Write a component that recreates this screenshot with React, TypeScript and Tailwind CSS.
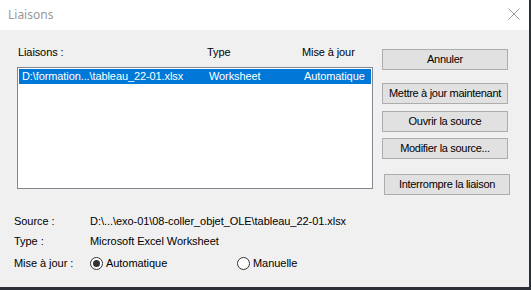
import React from "react";

const F = { fontFamily: '"Liberation Sans", Arial, sans-serif' };

function Btn({ label, className = "" }: { label: string; className?: string }) {
  return (
    <div
      className={`w-[126px] h-[21px] flex items-center justify-center bg-[#e1e1e1] border border-[#adadad] text-[11px] tracking-[-0.3px] text-black ${className}`}
    >
      {label}
    </div>
  );
}

function Radio({ checked }: { checked?: boolean }) {
  return (
    <div className="w-[13px] h-[13px] rounded-full border border-[#333333] bg-white flex items-center justify-center">
      {checked && <div className="w-[7px] h-[7px] rounded-full bg-[#333333]" />}
    </div>
  );
}

export default function App() {
  return (
    <div className="w-[531px] h-[290px] bg-[#2b2f36] overflow-hidden" style={F}>
      <div className="w-[529px] h-[287px] flex flex-col">
        <div className="h-[30px] bg-white flex items-center justify-between pl-[8px] pr-[9px]">
          <span
            className="text-[12px] text-[#999999]"
            style={{ fontFamily: '"Noto Sans", "Open Sans", sans-serif' }}
          >
            Liaisons
          </span>
          <svg width="12" height="12" viewBox="0 0 12 12" className="mt-[-2px]">
            <path d="M0.5 0.5 L11.5 11.5 M11.5 0.5 L0.5 11.5" stroke="#9a9a9a" strokeWidth="1" />
          </svg>
        </div>
        <div className="flex-1 bg-[#f0f0f0] text-[11px] tracking-[-0.1px] text-black">
          <div className="flex">
            <div className="ml-[17px] w-[356px] pt-[16px]">
              <div className="h-[13px] leading-[13px] flex">
                <span className="w-[190px] pl-[1px]">Liaisons :</span>
                <span className="w-[95px]">Type</span>
                <span>Mise à jour</span>
              </div>
              <div className="mt-[8px] h-[122px] border border-[#828790] bg-white p-[1px]">
                <div className="h-[15px] bg-[#0078d7] text-white flex items-center leading-[15px]">
                  <span className="w-[190px] pl-[3px]">D:\formation...\tableau_22-01.xlsx</span>
                  <span className="w-[95px]">Worksheet</span>
                  <span>Automatique</span>
                </div>
              </div>
            </div>
            <div className="ml-[9px] pt-[19px] flex flex-col">
              <Btn label="Annuler" />
              <Btn label="Mettre à jour maintenant" className="mt-[13px]" />
              <Btn label="Ouvrir la source" className="mt-[7px]" />
              <Btn label="Modifier la source..." className="mt-[6px]" />
              <Btn label="Interrompre la liaison" className="mt-[15px] ml-[2px]" />
            </div>
          </div>
          <div className="pl-[14px] mt-[19px] flex flex-col tracking-[-0.05px]">
            <div className="h-[14px] leading-[14px] flex">
              <span className="w-[76px]">Source :</span>
              <span>D:\...\exo-01\08-coller_objet_OLE\tableau_22-01.xlsx</span>
            </div>
            <div className="h-[14px] leading-[14px] flex mt-[6px]">
              <span className="w-[76px]">Type :</span>
              <span>Microsoft Excel Worksheet</span>
            </div>
            <div className="h-[14px] leading-[14px] flex items-center mt-[8px]">
              <span className="w-[76px]">Mise à jour :</span>
              <Radio checked />
              <span className="ml-[3px] w-[131px]">Automatique</span>
              <Radio />
              <span className="ml-[3px]">Manuelle</span>
            </div>
          </div>
        </div>
      </div>
    </div>
  );
}
